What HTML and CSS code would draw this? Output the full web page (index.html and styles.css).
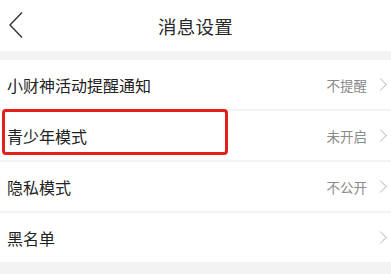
FILE: index.html
```html
<!DOCTYPE html>
<html lang="zh-CN">
<head>
    <meta charset="UTF-8">
    <meta name="viewport" content="width=device-width, initial-scale=1.0">
    <title>消息设置</title>
    <link rel="stylesheet" href="styles.css">
</head>
<body>

<!-- Top Bar -->
<div class="top-bar">
    <span class="back-btn">
        <svg width="16" height="28" viewBox="0 0 16 28">
            <path d="M14 1.5 L2 14 L14 26.5" fill="none" stroke="#333" stroke-width="1.4"/>
        </svg>
    </span>
    <div class="title">消息设置</div>
</div>

<!-- Settings List -->
<div class="settings-list">
    <div class="row">
        <span class="label">小财神活动提醒通知</span>
        <span class="value">不提醒</span>
        <span class="arrow"></span>
    </div>
    <div class="row row-marked">
        <span class="label">青少年模式</span>
        <span class="value">未开启</span>
        <span class="arrow"></span>
        <div class="mark-box"></div>
    </div>
    <div class="row">
        <span class="label">隐私模式</span>
        <span class="value">不公开</span>
        <span class="arrow"></span>
    </div>
    <div class="row">
        <span class="label">黑名单</span>
        <span class="value"></span>
        <span class="arrow"></span>
    </div>
</div>

</body>
</html>
```

FILE: styles.css
```css
/* Global Styling */
body {
    margin: 0;
    font-family: "Noto Sans CJK SC", "Noto Sans", sans-serif;
    background-color: #f3f3f3;
    color: #222;
}

/* Top Bar */
.top-bar {
    height: 51px;
    background-color: #fff;
    display: flex;
    align-items: center;
    justify-content: center;
    position: relative;
}

.back-btn {
    position: absolute;
    left: 8px;
    top: 11px;
    display: flex;
}

.title {
    font-size: 18.5px;
    color: #2a2a2a;
    letter-spacing: 0.3px;
}

/* Settings List */
.settings-list {
    margin-top: 9px;
    display: flex;
    flex-direction: column;
    gap: 2px;
}

.row {
    height: 49px;
    background-color: #fff;
    display: flex;
    align-items: center;
    padding: 0 4px 0 7px;
}

.row-marked {
    position: relative;
}

.label {
    font-size: 16px;
    flex: 1;
}

.value {
    font-size: 13.5px;
    color: #8a8a8a;
    margin-right: 9px;
}

.arrow {
    width: 8px;
    height: 8px;
    border-top: 1px solid #c4c4c4;
    border-right: 1px solid #c4c4c4;
    transform: rotate(45deg);
    margin-right: 2px;
}

/* Red annotation box */
.mark-box {
    position: absolute;
    left: 2px;
    top: -2px;
    width: 220px;
    height: 40px;
    border: 3px solid #e3201b;
    border-radius: 4px;
}
```
